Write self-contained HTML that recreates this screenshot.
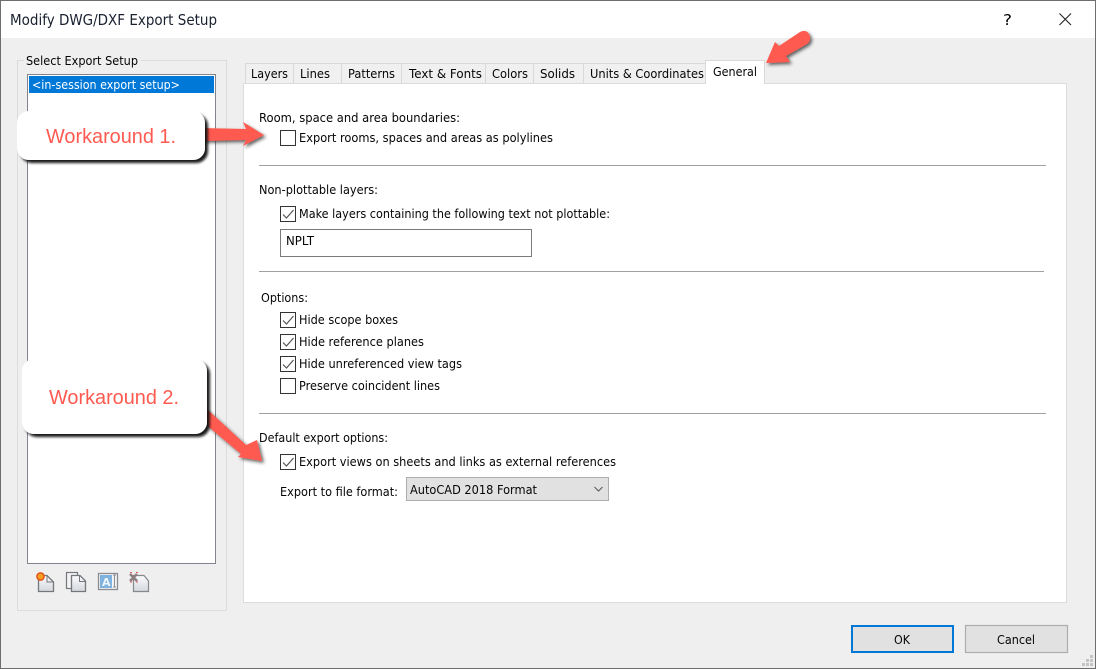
<!DOCTYPE html>
<html><head><meta charset="utf-8"><style>
html,body{margin:0;padding:0;width:1096px;height:669px;overflow:hidden;background:#fff}
svg{display:block}
text{font-family:"DejaVu Sans","Liberation Sans",sans-serif;font-size:12px;fill:#050505}
</style></head><body>
<svg width="1096" height="669" viewBox="0 0 1096 669" xmlns="http://www.w3.org/2000/svg">
<defs>
<filter id="sh" x="-20%" y="-20%" width="140%" height="150%"><feDropShadow dx="3" dy="3" stdDeviation="1.2" flood-color="#111" flood-opacity=".95"/></filter>
<filter id="ash" x="-30%" y="-30%" width="170%" height="170%"><feDropShadow dx="2" dy="2" stdDeviation="1.5" flood-color="#222" flood-opacity=".7"/></filter>
<linearGradient id="pg" x1="0" y1="0" x2="0" y2="1"><stop offset="0" stop-color="#fbfbfd"/><stop offset="1" stop-color="#d4d7dc"/></linearGradient>
</defs>
<rect width="1096" height="669" fill="#6e6e6e"/>
<rect x="1" y="1" width="1094" height="667" fill="#efefef"/>
<rect x="1" y="1" width="1094" height="37" fill="#fff"/>
<text x="10" y="25" style="font-size:15px;fill:#1a2230" textLength="207" lengthAdjust="spacingAndGlyphs">Modify DWG/DXF Export Setup</text>
<text x="1003" y="25" style="font-size:15px" textLength="9" lengthAdjust="spacingAndGlyphs">?</text>
<path d="M1059.500 13.500L1071 25M1071 13.500L1059.500 25" stroke="#222" stroke-width="1.100" fill="none"/>

<rect x="17.500" y="60.500" width="209" height="550" fill="none" stroke="#dcdcdc"/>
<rect x="24" y="54" width="117" height="12" fill="#efefef"/>
<text x="26" y="65" textLength="112" lengthAdjust="spacingAndGlyphs">Select Export Setup</text>
<rect x="27.500" y="74.500" width="188" height="489" fill="#fff" stroke="#82838c"/>
<rect x="29" y="76" width="185" height="17" fill="#0078d7"/>
<text x="32" y="89" style="fill:#fff" textLength="148" lengthAdjust="spacingAndGlyphs">&lt;in-session export setup&gt;</text>

<!-- small icons -->
<path d="M38.500 575.500H47L53.500 582V591.500H38.500Z" fill="url(#pg)" stroke="#74777c" stroke-width="1.300"/>
<path d="M47 575.500V582H53.500" fill="none" stroke="#74777c"/>
<circle cx="40.500" cy="576.500" r="3.600" fill="#f5a020" stroke="#e2531a" stroke-width="1.500"/>
<rect x="66.500" y="572.500" width="11" height="16" fill="#f3f3f5" stroke="#74777c" stroke-width="1.200"/>
<path d="M71.500 575.500H80L85.500 581V591.500H71.500Z" fill="url(#pg)" stroke="#74777c" stroke-width="1.300"/>
<path d="M79.500 575.500V581.500H85.500" fill="none" stroke="#74777c"/>
<rect x="98.500" y="573.500" width="19" height="16" fill="#f2f4f6" stroke="#8b8d92" stroke-width="1.300"/>
<rect x="100" y="575" width="12" height="13" fill="#7fb2de"/>
<text x="102" y="586" style="font-size:11px;font-weight:bold;fill:#eef5fb">A</text>
<path d="M114.500 575V587M113 575H116M113 587H116" stroke="#8b8d92" fill="none"/>
<path d="M133.500 575.500H144L148.500 581V591.500H133.500Z" fill="url(#pg)" stroke="#85888d" stroke-width="1.200"/>
<path d="M130 574L137 581M137 574L130 581" stroke="#8d7f7f" stroke-width="2.600"/>
<path d="M130 572.500h2M136 572.500h2M130 582h2M136 582h2" stroke="#e05555" stroke-width="1"/>

<!-- tabs -->
<g fill="#f0f0f0" stroke="#d9d9d9">
<rect x="245.500" y="63.500" width="48" height="21"/>
<rect x="293.500" y="63.500" width="48" height="21"/>
<rect x="341.500" y="63.500" width="60" height="21"/>
<rect x="401.500" y="63.500" width="84" height="21"/>
<rect x="485.500" y="63.500" width="48" height="21"/>
<rect x="533.500" y="63.500" width="50" height="21"/>
<rect x="583.500" y="63.500" width="123" height="21"/>
</g>
<rect x="243.500" y="83.500" width="823" height="519" fill="#fff" stroke="#dcdcdc"/>
<path d="M705.500 84V60.500H764.500V84" fill="#fff" stroke="#d9d9d9"/>
<rect x="706" y="82" width="58" height="3" fill="#fff"/>
<text x="251" y="78" textLength="37" lengthAdjust="spacingAndGlyphs">Layers</text>
<text x="300" y="78" textLength="30" lengthAdjust="spacingAndGlyphs">Lines</text>
<text x="348" y="78" textLength="47" lengthAdjust="spacingAndGlyphs">Patterns</text>
<text x="409" y="78" textLength="73" lengthAdjust="spacingAndGlyphs">Text &amp; Fonts</text>
<text x="492" y="78" textLength="36" lengthAdjust="spacingAndGlyphs">Colors</text>
<text x="540" y="78" textLength="35" lengthAdjust="spacingAndGlyphs">Solids</text>
<text x="590" y="78" textLength="114" lengthAdjust="spacingAndGlyphs">Units &amp; Coordinates</text>
<text x="713" y="76" textLength="44" lengthAdjust="spacingAndGlyphs">General</text>

<text x="259" y="122" textLength="201" lengthAdjust="spacingAndGlyphs">Room, space and area boundaries:</text>
<text x="299" y="142" textLength="254" lengthAdjust="spacingAndGlyphs">Export rooms, spaces and areas as polylines</text>
<path d="M259 165.500H1046M259 271.500H1044M259 413.500H1046" stroke="#a0a0a0"/>
<text x="259" y="194" textLength="119" lengthAdjust="spacingAndGlyphs">Non-plottable layers:</text>
<text x="299" y="218" textLength="311" lengthAdjust="spacingAndGlyphs">Make layers containing the following text not plottable:</text>
<rect x="280.500" y="229.500" width="251" height="27" fill="#fff" stroke="#7a7a7a"/>
<text x="286" y="245" textLength="28" lengthAdjust="spacingAndGlyphs">NPLT</text>
<text x="261" y="302" textLength="47" lengthAdjust="spacingAndGlyphs">Options:</text>
<text x="299" y="324" textLength="99" lengthAdjust="spacingAndGlyphs">Hide scope boxes</text>
<text x="299" y="346" textLength="125" lengthAdjust="spacingAndGlyphs">Hide reference planes</text>
<text x="299" y="368" textLength="163" lengthAdjust="spacingAndGlyphs">Hide unreferenced view tags</text>
<text x="299" y="390" textLength="141" lengthAdjust="spacingAndGlyphs">Preserve coincident lines</text>
<text x="259" y="442" textLength="129" lengthAdjust="spacingAndGlyphs">Default export options:</text>
<text x="299" y="466" textLength="317" lengthAdjust="spacingAndGlyphs">Export views on sheets and links as external references</text>
<text x="280" y="496" textLength="118" lengthAdjust="spacingAndGlyphs">Export to file format:</text>

<!-- checkboxes -->
<g fill="#fff" stroke="#333">
<rect x="280.500" y="130.500" width="15" height="15"/>
<rect x="280.500" y="206.500" width="15" height="15"/>
<rect x="280.500" y="312.500" width="15" height="15"/>
<rect x="280.500" y="334.500" width="15" height="15"/>
<rect x="280.500" y="356.500" width="15" height="15"/>
<rect x="280.500" y="378.500" width="15" height="15"/>
<rect x="280.500" y="454.500" width="15" height="15"/>
</g>
<g fill="none" stroke="#555" stroke-width="1.200">
<path d="M283 214.500L286.500 218L293.500 210"/>
<path d="M283 320.500L286.500 324L293.500 316"/>
<path d="M283 342.500L286.500 346L293.500 338"/>
<path d="M283 364.500L286.500 368L293.500 360"/>
<path d="M283 462.500L286.500 466L293.500 458"/>
</g>

<!-- combo -->
<rect x="406.500" y="477.500" width="202" height="23" fill="#e1e1e1" stroke="#adadad"/>
<text x="410" y="494" textLength="127" lengthAdjust="spacingAndGlyphs">AutoCAD 2018 Format</text>
<path d="M594.500 487L598.500 491L602.500 487" fill="none" stroke="#555"/>

<!-- buttons -->
<rect x="852" y="626" width="101" height="26" fill="#e1e1e1" stroke="#0078d7" stroke-width="2"/>
<text x="894" y="644" textLength="16" lengthAdjust="spacingAndGlyphs">OK</text>
<rect x="965.500" y="625.500" width="102" height="27" fill="#e1e1e1" stroke="#adadad" stroke-width="1.200"/>
<text x="997" y="644" textLength="38" lengthAdjust="spacingAndGlyphs">Cancel</text>
<g fill="#c4c4c4"><rect x="1090" y="655" width="3" height="3"/><rect x="1086" y="659" width="3" height="3"/><rect x="1090" y="659" width="3" height="3"/><rect x="1082" y="663" width="3" height="3"/><rect x="1086" y="663" width="3" height="3"/><rect x="1090" y="663" width="3" height="3"/></g>

<!-- arrows -->
<g fill="#ff5a50" filter="url(#ash)">
<path d="M200 128L246 129L243 122L264 135L243 146L246 140L200 141Z"/>
<path d="M204 408L209 411L246 445L257 440L262 461L238 457L241 454L204 423Z"/>
<path d="M766 63L775 42L779 46L800 32Q806 29 809 34Q812 40 807 44L786 56L790 62Z"/>
</g>

<!-- callouts -->
<rect x="17" y="111" width="188" height="49" rx="12" fill="#fff" filter="url(#sh)"/>
<text x="46" y="143" style="font-family:'Liberation Sans',sans-serif;font-size:20px;fill:#ff5a50" textLength="130" lengthAdjust="spacingAndGlyphs">Workaround 1.</text>
<rect x="22" y="359" width="185" height="75" rx="12" fill="#fff" filter="url(#sh)"/>
<text x="49" y="404" style="font-family:'Liberation Sans',sans-serif;font-size:20px;fill:#ff5a50" textLength="130" lengthAdjust="spacingAndGlyphs">Workaround 2.</text>
</svg>
</body></html>
